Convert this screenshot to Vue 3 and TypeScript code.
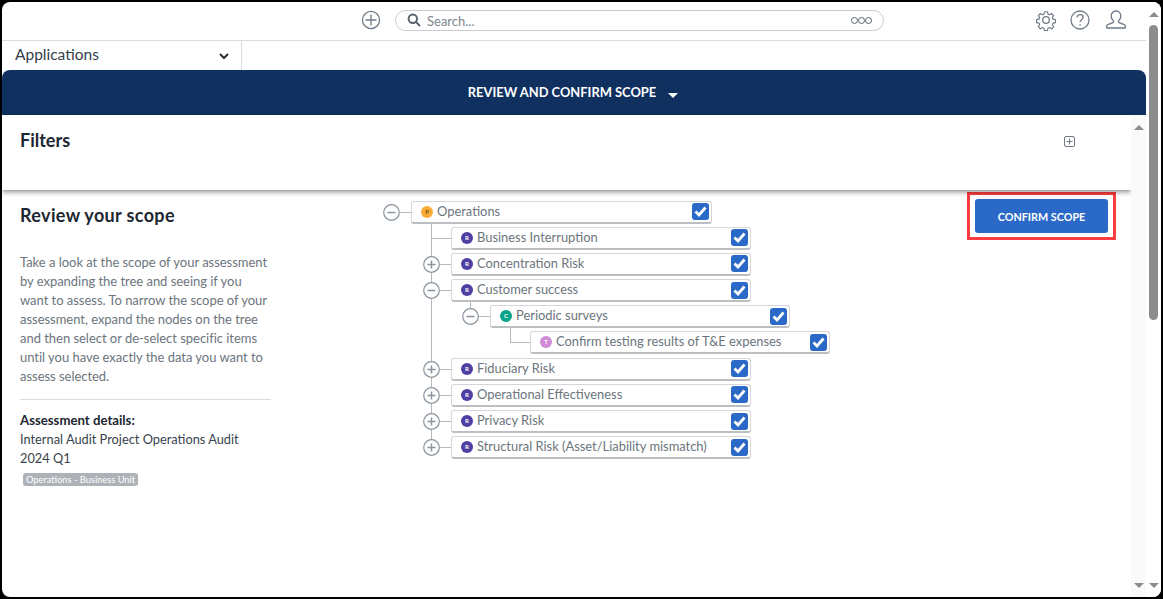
<script setup lang="ts">
interface TreeNode {
  label: string
  level: number
  toggle: '' | 'plus' | 'minus'
  kind: 'p' | 'r' | 'c' | 't'
}
const nodes: TreeNode[] = [
  { label: 'Operations', level: 0, toggle: 'minus', kind: 'p' },
  { label: 'Business Interruption', level: 1, toggle: '', kind: 'r' },
  { label: 'Concentration Risk', level: 1, toggle: 'plus', kind: 'r' },
  { label: 'Customer success', level: 1, toggle: 'minus', kind: 'r' },
  { label: 'Periodic surveys', level: 2, toggle: 'minus', kind: 'c' },
  { label: 'Confirm testing results of T&E expenses', level: 3, toggle: '', kind: 't' },
  { label: 'Fiduciary Risk', level: 1, toggle: 'plus', kind: 'r' },
  { label: 'Operational Effectiveness', level: 1, toggle: 'plus', kind: 'r' },
  { label: 'Privacy Risk', level: 1, toggle: 'plus', kind: 'r' },
  { label: 'Structural Risk (Asset/Liability mismatch)', level: 1, toggle: 'plus', kind: 'r' },
]
</script>

<template>
  <div class="frame">
    <div class="window">
      <div class="main">
        <header class="topbar">
          <svg class="add" width="20" height="20" viewBox="0 0 20 20" fill="none" stroke="#6f7a85" stroke-width="1.3">
            <circle cx="10" cy="10" r="8.6" />
            <path d="M10 4.5v11M4.5 10h11" />
          </svg>
          <div class="search">
            <svg width="14" height="14" viewBox="0 0 14 14" fill="none" stroke="#59636e" stroke-width="2">
              <circle cx="5.8" cy="5.8" r="4.2" />
              <path d="M9 9l4 4" />
            </svg>
            <span class="search-text">Search...</span>
            <span class="dots"><i></i><i></i><i></i></span>
          </div>
          <div class="top-icons">
            <svg width="22" height="22" viewBox="0 0 24 24" fill="none" stroke="#6f7a85" stroke-width="1.4" stroke-linejoin="round">
              <path d="M10.2 2h3.6l.6 2.9 1.9.8 2.5-1.6 2.5 2.5-1.6 2.5.8 1.9 2.9.6v3.6l-2.9.6-.8 1.9 1.6 2.5-2.5 2.5-2.5-1.6-1.9.8-.6 2.9h-3.6l-.6-2.9-1.9-.8-2.5 1.6-2.5-2.5 1.6-2.5-.8-1.9-2.9-.6v-3.6l2.9-.6.8-1.9-1.6-2.5 2.5-2.5 2.500 1.6 1.9-.8z" transform="translate(1.2 1.2) scale(.9)" />
              <circle cx="12" cy="12" r="3.6" />
            </svg>
            <svg width="20" height="20" viewBox="0 0 20 20" fill="none" stroke="#6f7a85" stroke-width="1.3">
              <circle cx="10" cy="10" r="9" />
              <path d="M7 7.6c0-1.8 1.4-2.9 3.1-2.9 1.700 0 3 1.100 3 2.600 0 2.300-3 2.500-3 4.700" />
              <path d="M10.100 14.200v1.500" />
            </svg>
            <svg class="user" width="20" height="20" viewBox="0 0 20 20" fill="none" stroke="#6f7a85" stroke-width="1.3" stroke-linejoin="round">
              <path d="M10 1c3 0 4.800 2.200 4.800 5 0 2-.9 3.800-2.100 4.800-.5.500-.4 1.500.3 1.800l5.200 2.100c.8.300 1.100 1 1.100 1.700v1.600H.7v-1.600c0-.7.300-1.400 1.100-1.700L7 12.600c.7-.3.800-1.300.3-1.800C6.100 9.800 5.200 8 5.200 6c0-2.800 1.800-5 4.800-5z" />
            </svg>
          </div>
        </header>

        <div class="appbar">
          <div class="appcell">
            <span class="app-name">Applications</span>
            <svg class="chev" width="10" height="7" viewBox="0 0 10 7" fill="none" stroke="#26323d" stroke-width="2">
              <path d="M1 1l4 4 4-4" />
            </svg>
          </div>
        </div>

        <div class="banner">
          <span>REVIEW AND CONFIRM SCOPE</span>
          <i class="caret"></i>
        </div>

        <div class="content">
          <div class="panel">
            <section class="filters">
              <h2>Filters</h2>
              <svg width="11" height="11" viewBox="0 0 11 11" fill="none" stroke="#6f7a85" stroke-width="1">
                <rect x=".5" y=".5" width="10" height="10" rx="1.500" />
                <path d="M5.500 2.500v6M2.500 5.500h6" />
              </svg>
            </section>

            <section class="body">
              <aside class="side">
                <h2 class="review">Review your scope</h2>
                <p class="intro">
                  Take a look at the scope of your assessment by expanding the tree and seeing if you want to assess. To narrow the scope of your assessment, expand the nodes on the tree and then select or de-select specific items until you have exactly the data you want to assess selected.
                </p>
                <hr />
                <div class="details-title">Assessment details:</div>
                <div class="details-text">Internal Audit Project Operations Audit 2024 Q1</div>
                <span class="tag">Operations - Business Unit</span>
              </aside>

              <div class="tree">
                <i class="vline trunk"></i>
                <i class="vline sub"></i>
                <i class="vline leaf"></i>
                <i class="hline leaf-h"></i>
                <div v-for="node in nodes" :key="node.label" class="row" :class="'level-' + node.level">
                  <span v-if="node.toggle" class="toggle">
                    <svg width="17" height="17" viewBox="0 0 17 17" fill="#fff" stroke="#8a949e" stroke-width="1.200">
                      <circle cx="8.500" cy="8.500" r="7.800" />
                      <path d="M4.500 8.500h8" stroke-width="1.500" />
                      <path v-if="node.toggle === 'plus'" d="M8.500 4.500v8" stroke-width="1.500" />
                    </svg>
                  </span>
                  <span class="link" :class="{ long: !node.toggle && node.level === 1 }"></span>
                  <div class="node">
                    <span class="dot" :class="'dot-' + node.kind">{{ node.kind.toUpperCase() }}</span>
                    <span class="label">{{ node.label }}</span>
                    <span class="check">
                      <svg width="13" height="11" viewBox="0 0 13 11" fill="none" stroke="#fff" stroke-width="2.800">
                        <path d="M1.500 5.500l3.500 3.500 6.500-7.500" />
                      </svg>
                    </span>
                  </div>
                </div>
              </div>

              <div class="action">
                <div class="highlight">
                  <button class="confirm" type="button">CONFIRM SCOPE</button>
                </div>
              </div>
            </section>
          </div>

          <div class="scroll inner">
            <i class="arrow up"></i>
            <i class="arrow down"></i>
          </div>
        </div>
      </div>

      <div class="scroll outer">
        <i class="arrow up"></i>
        <i class="thumb"></i>
        <i class="arrow down"></i>
      </div>
    </div>
  </div>
</template>

<style scoped>
.frame {
  width: 1163px;
  height: 599px;
  box-sizing: border-box;
  padding: 2px;
  background: #000;
  font-family: Lato, "Open Sans", sans-serif;
  color: #6c757d;
}
.window {
  display: flex;
  height: 100%;
  background: #fff;
  border-radius: 8px;
  overflow: hidden;
}
.main {
  width: 1144px;
  display: flex;
  flex-direction: column;
  flex: none;
}
.topbar {
  height: 39px;
  flex: none;
  box-sizing: border-box;
  border-bottom: 1px solid #dcdcdc;
  display: flex;
  align-items: center;
  padding: 0 20px 2px 359px;
}
.add { flex: none; }
.search {
  margin-left: 14px;
  width: 489px;
  height: 21px;
  box-sizing: border-box;
  border: 1px solid #c8ccd0;
  border-radius: 11px;
  display: flex;
  align-items: center;
  padding: 0 11px;
}
.search-text {
  margin-left: 6px;
  padding-top: 1px;
  font-size: 13px;
  color: #7d868f;
  flex: 1;
}
.dots { display: flex; }
.dots i {
  width: 7px;
  height: 7px;
  box-sizing: border-box;
  border: 1.300px solid #59636e;
  border-radius: 50%;
}
.top-icons {
  margin-left: auto;
  display: flex;
  align-items: center;
  gap: 13px;
}
.user { margin-left: 3px; }
.appbar {
  height: 29px;
  flex: none;
  display: flex;
}
.appcell {
  width: 240px;
  box-sizing: border-box;
  border-right: 1px solid #dcdcdc;
  padding: 0 12px 0 13px;
  display: flex;
  align-items: center;
  justify-content: space-between;
  font-size: 15.500px;
  color: #33404c;
}
.app-name { margin-bottom: 3px; }
.chev { margin-top: 2px; }
.banner {
  height: 45px;
  flex: none;
  box-sizing: border-box;
  padding: 0 2px 2px 0;
  background: #10305f;
  border-radius: 8px 8px 0 0;
  display: flex;
  align-items: center;
  justify-content: center;
  color: #fff;
  font-size: 12.900px;
  font-weight: 700;
}
.caret {
  margin: 7px 0 0 12px;
  border: 5px solid transparent;
  border-top-color: #fff;
  border-bottom: 0;
}
.content {
  flex: 1;
  display: flex;
  min-height: 0;
}
.panel {
  width: 1129px;
  flex: none;
  display: flex;
  flex-direction: column;
}
.filters {
  height: 75px;
  flex: none;
  box-sizing: border-box;
  padding: 14px 56px 0 18px;
  display: flex;
  justify-content: space-between;
  align-items: flex-start;
  box-shadow: 0 2px 5px rgba(0, 0, 0, 0.45);
  position: relative;
}
.filters svg { margin-top: 7px; }
h2 {
  margin: 0;
  font-size: 18px;
  line-height: 22px;
  font-weight: 700;
  color: #1d2732;
}
.review { letter-spacing: 0.35px; }
.body {
  flex: 1;
  display: flex;
  align-items: flex-start;
}
.side {
  width: 251px;
  margin-left: 18px;
  padding-top: 14px;
  flex: none;
}
.intro {
  margin: 27px 0 0;
  font-size: 13px;
  line-height: 19px;
  color: #6c757d;
  width: 251px;
  letter-spacing: -0.03px;
}
hr {
  margin: 13px 0 0;
  border: 0;
  border-top: 1px solid #dcdcdc;
}
.details-title {
  margin-top: 11px;
  font-size: 13.200px;
  line-height: 19px;
  font-weight: 700;
  color: #1d2732;
}
.details-text {
  font-size: 12.800px;
  line-height: 19px;
  color: #38434e;
  width: 240px;
}
.tag {
  display: inline-block;
  margin: 5px 0 0 3px;
  padding: 0 3px;
  height: 13px;
  line-height: 13px;
  background: #adb2b8;
  border-radius: 3px;
  color: #fff;
  font-size: 9.300px;
  vertical-align: top;
}
.tree {
  position: relative;
  margin: 11px 0 0 112px;
  width: 450px;
  flex: none;
}
.vline, .hline {
  position: absolute;
  background: #b5b9bd;
}
.vline { width: 1px; }
.hline { height: 1px; }
.trunk { left: 48px; top: 20px; height: 226px; }
.sub { left: 87px; top: 100px; height: 12px; }
.leaf { left: 127px; top: 126px; height: 16px; }
.leaf-h { left: 127px; top: 141px; width: 20px; }
.row {
  position: relative;
  display: flex;
  align-items: center;
  height: 22px;
  margin-bottom: 4.200px;
}
.level-1 { margin-left: 40px; }
.level-2 { margin-left: 79px; }
.level-3 { margin-left: 119px; padding-left: 28px; }
.level-1:not(:has(.toggle)) { padding-left: 28px; }
.toggle {
  width: 17px;
  height: 17px;
  flex: none;
  display: flex;
  position: relative;
}
.link {
  width: 11px;
  height: 1px;
  background: #b5b9bd;
  flex: none;
}
.link.long {
  position: absolute;
  left: 8px;
  width: 20px;
}
.level-3 .link { display: none; }
.node {
  position: relative;
  width: 300px;
  height: 23px;
  box-sizing: border-box;
  border: 1px solid #d4d6d9;
  border-bottom: 2px solid #bcbfc2;
  border-radius: 3px;
  background: #fff;
  display: flex;
  align-items: center;
  padding: 0 1px 0 9px;
  flex: none;
}
.level-0 .node { width: 301px; }
.dot {
  width: 12px;
  height: 12px;
  border-radius: 50%;
  flex: none;
  font-size: 6px;
  font-weight: 700;
  line-height: 12px;
  text-align: center;
  color: #fff;
}
.dot-p { background: #fbab36; color: #7a5210; }
.dot-r { background: #4f3fa3; }
.dot-c { background: #0aa38a; }
.dot-t { background: #cf8bd4; }
.label {
  margin-left: 4px;
  padding-bottom: 2px;
  font-size: 12.900px;
  color: #6c757d;
  flex: 1;
  white-space: nowrap;
}
.check {
  width: 17px;
  height: 17px;
  margin-right: 1px;
  background: #2a69c7;
  border-radius: 3px;
  display: flex;
  align-items: center;
  justify-content: center;
  flex: none;
}
.action {
  margin-left: auto;
  margin-right: 15px;
  margin-top: 2px;
}
.highlight {
  border: 3px solid #fb3c40;
  padding: 4px 5px;
  background: #fff;
}
.confirm {
  display: block;
  width: 133px;
  height: 34px;
  border: 0;
  border-radius: 3px;
  background: #2a69c7;
  color: #fff;
  font-family: inherit;
  font-size: 10.800px;
  font-weight: 700;
}
.scroll {
  position: relative;
  flex: none;
}
.inner {
  width: 15px;
  background: #fafafa;
}
.outer {
  width: 17px;
  background: #fff;
}
.arrow {
  position: absolute;
  left: 3px;
  border-left: 5px solid transparent;
  border-right: 5px solid transparent;
}
.arrow.up { border-bottom: 5px solid #8c8c8c; }
.arrow.down { border-top: 5px solid #8c8c8c; }
.inner .up { top: 10px; }
.inner .down { bottom: 9px; }
.outer .up { top: 10px; }
.outer .down { bottom: 9px; }
.thumb {
  position: absolute;
  left: 3px;
  top: 23px;
  width: 9px;
  height: 295px;
  border-radius: 5px;
  background: #8c8c8c;
}
</style>
